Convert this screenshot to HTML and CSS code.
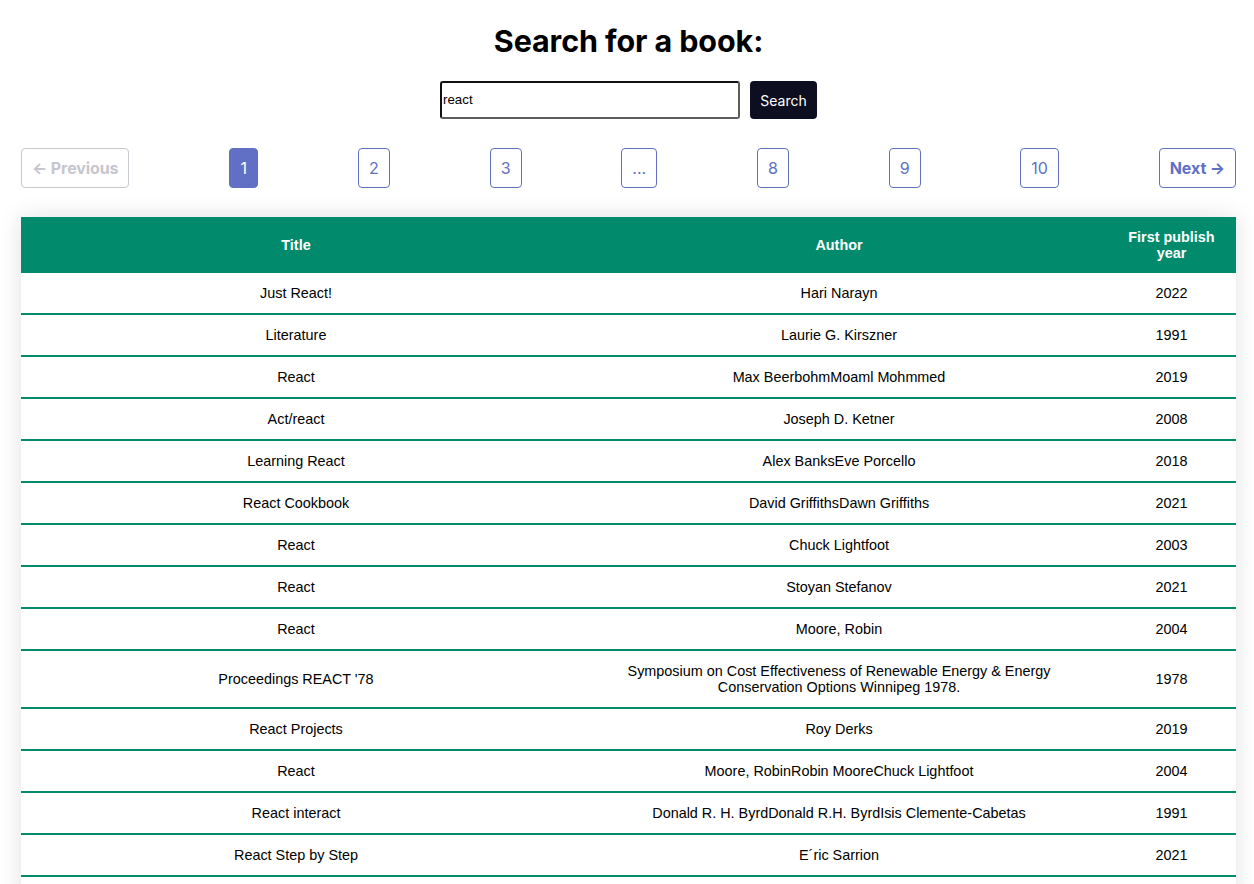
FILE: index.html
```html
<!DOCTYPE html>
<html lang="en">
<head>
<meta charset="utf-8">
<title>Book search</title>
<link rel="stylesheet" href="styles.css">
</head>
<body>
<main class="page">
  <h1 class="heading">Search for a book:</h1>
  <form class="search">
    <input class="search-input" type="text" value="react">
    <button class="search-btn" type="button">Search</button>
  </form>
  <nav class="pager">
    <button class="pager-nav disabled" type="button">← Previous</button>
    <button class="pager-page active" type="button">1</button>
    <button class="pager-page" type="button">2</button>
    <button class="pager-page" type="button">3</button>
    <button class="pager-page" type="button">...</button>
    <button class="pager-page" type="button">8</button>
    <button class="pager-page" type="button">9</button>
    <button class="pager-page" type="button">10</button>
    <button class="pager-nav" type="button">Next →</button>
  </nav>
  <table class="books">
    <colgroup>
      <col class="col-title">
      <col class="col-author">
      <col class="col-year">
    </colgroup>
    <thead>
      <tr><th>Title</th><th>Author</th><th>First publish year</th></tr>
    </thead>
    <tbody>
      <tr><td>Just React!</td><td>Hari Narayn</td><td>2022</td></tr>
      <tr><td>Literature</td><td>Laurie G. Kirszner</td><td>1991</td></tr>
      <tr><td>React</td><td>Max BeerbohmMoaml Mohmmed</td><td>2019</td></tr>
      <tr><td>Act/react</td><td>Joseph D. Ketner</td><td>2008</td></tr>
      <tr><td>Learning React</td><td>Alex BanksEve Porcello</td><td>2018</td></tr>
      <tr><td>React Cookbook</td><td>David GriffithsDawn Griffiths</td><td>2021</td></tr>
      <tr><td>React</td><td>Chuck Lightfoot</td><td>2003</td></tr>
      <tr><td>React</td><td>Stoyan Stefanov</td><td>2021</td></tr>
      <tr><td>React</td><td>Moore, Robin</td><td>2004</td></tr>
      <tr><td>Proceedings REACT '78</td><td>Symposium on Cost Effectiveness of Renewable Energy &amp; Energy Conservation Options Winnipeg 1978.</td><td>1978</td></tr>
      <tr><td>React Projects</td><td>Roy Derks</td><td>2019</td></tr>
      <tr><td>React</td><td>Moore, RobinRobin MooreChuck Lightfoot</td><td>2004</td></tr>
      <tr><td>React interact</td><td>Donald R. H. ByrdDonald R.H. ByrdIsis Clemente-Cabetas</td><td>1991</td></tr>
      <tr><td>React Step by Step</td><td>E´ric Sarrion</td><td>2021</td></tr>
      <tr><td>&nbsp;</td><td>&nbsp;</td><td>&nbsp;</td></tr>
    </tbody>
  </table>
</main>
</body>
</html>
```

FILE: styles.css
```css
html, body {
  margin: 0;
  padding: 0;
  background: #ffffff;
}

body {
  font-family: "Liberation Sans", Arial, sans-serif;
  color: #000;
}

.page {
  padding: 0 18px 40px 21px;
  display: flex;
  flex-direction: column;
  align-items: stretch;
}

.heading {
  font-family: Inter, "Liberation Sans", sans-serif;
  font-weight: 700;
  font-size: 30.5px;
  line-height: 38px;
  text-align: center;
  margin: 22px 0 21px;
  letter-spacing: -0.1px;
}

.search {
  display: flex;
  justify-content: center;
  gap: 10px;
  margin: 0 0 29px;
}

.search-input {
  box-sizing: border-box;
  width: 300px;
  height: 38px;
  margin: 0;
  padding: 0 1px 1px;
  border: 2px solid;
  border-color: #111 #5c5c5c #5c5c5c #111;
  border-radius: 3px;
  font-family: "Liberation Sans", Arial, sans-serif;
  font-size: 13.33px;
  color: #000;
  background: #fff;
  outline: none;
}

.search-btn {
  box-sizing: border-box;
  height: 38px;
  width: 67px;
  padding: 0;
  border: none;
  border-radius: 4px;
  background: #0d0f20;
  color: #fff;
  font-family: Inter, "Liberation Sans", sans-serif;
  font-size: 14px;
  cursor: pointer;
}

.pager {
  display: flex;
  justify-content: space-between;
  align-items: center;
  margin: 0 0 29px;
}

.pager button {
  box-sizing: border-box;
  height: 40px;
  padding: 0 10px;
  border: 1px solid #6170c4;
  border-radius: 4px;
  background: #fff;
  color: #6170c4;
  font-family: Inter, "Liberation Sans", sans-serif;
  font-size: 16px;
  line-height: 38px;
  cursor: pointer;
}

.pager .pager-page {
  min-width: 29px;
  padding: 0 10px;
}

.pager .pager-page.active {
  background: #6170c4;
  color: #fff;
}

.pager .pager-nav {
  font-weight: 700;
  padding: 0 10px;
  letter-spacing: -0.1px;
}

.pager .pager-nav.disabled {
  border-color: #c9c9d0;
  color: #c6c6ce;
  cursor: default;
}

.books {
  width: 1215px;
  table-layout: fixed;
  border-collapse: collapse;
  box-shadow: 0 0 22px rgba(0, 0, 0, 0.12);
  font-size: 14.4px;
  line-height: 16px;
}

.col-title { width: 550px; }
.col-author { width: 536px; }
.col-year { width: 129px; }

.books th {
  background: #018b6c;
  color: #fff;
  font-weight: 700;
  padding: 12px 20px;
  text-align: center;
}

.books td {
  padding: 12px 20px;
  text-align: center;
  border-bottom: 2px solid #018b6c;
  background: #fff;
}
```
